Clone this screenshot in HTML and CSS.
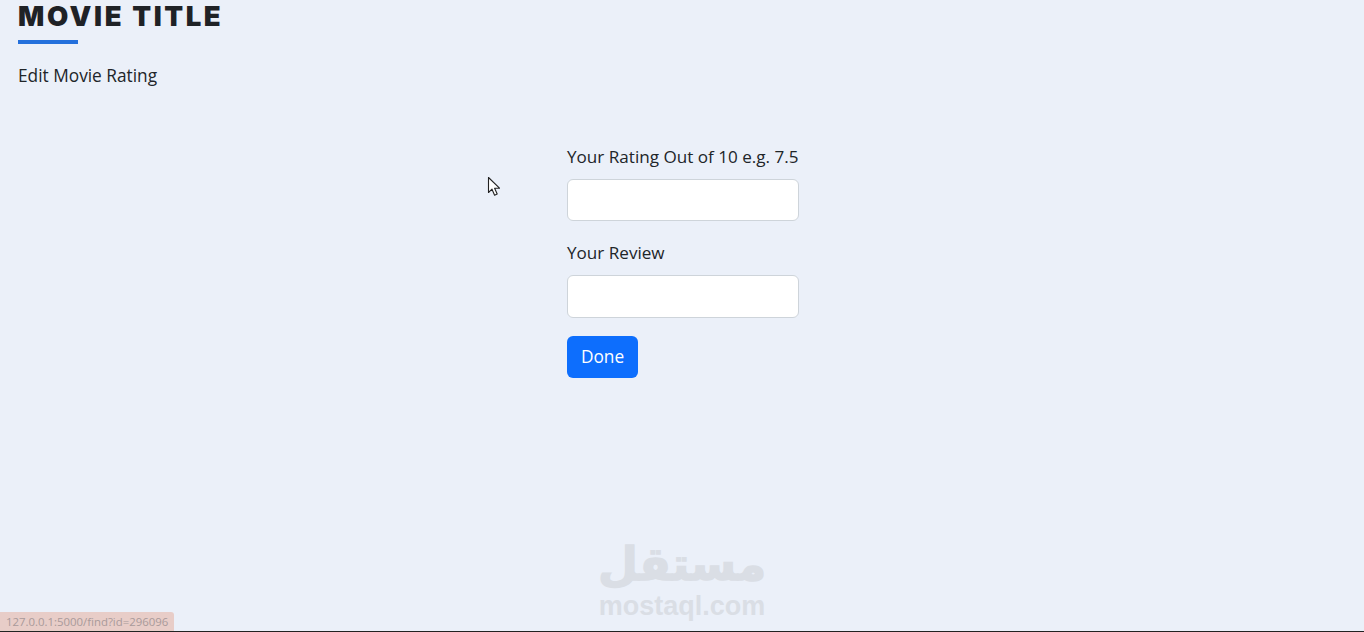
FILE: index.html
```html
<!DOCTYPE html>
<html>
<head>
    <title>Edit Movie Rating</title>
    <link rel="stylesheet" href="styles.css">
</head>
<body>
    <div class="page">
        <!-- Cabecera -->
        <div class="header">
            <h1>MOVIE TITLE</h1>
            <div class="underline"></div>
            <p>Edit Movie Rating</p>
        </div>

        <!-- Formulario -->
        <form class="rating-form">
            <label for="rating">Your Rating Out of 10 e.g. 7.5</label>
            <input type="text" id="rating">
            <label for="review">Your Review</label>
            <input type="text" id="review">
            <button type="button">Done</button>
        </form>

        <!-- Cursor -->
        <svg class="cursor" width="14" height="21" viewBox="0 0 14 21">
            <path d="M1.5 1.5V16.5L5 13.2L7.6 19.2L10.2 18L7.6 12.2H12.5Z" fill="#fff" stroke="#222" stroke-width="1.1" stroke-linejoin="round"/>
        </svg>

        <!-- Marca de agua -->
        <div class="watermark">
            <div class="wm-arabic" lang="ar" dir="rtl">مستقل</div>
            <div class="wm-latin">mostaql.com</div>
        </div>

        <div class="status">127.0.0.1:5000/find?id=296096</div>
    </div>
</body>
</html>
```
FILE: styles.css
```css
* { box-sizing: border-box; }
body { margin: 0; background: #ebf0f9; color: #212529; font-family: "Open Sans", "Noto Sans", sans-serif; }
.page { position: relative; height: 632px; overflow: hidden; border-bottom: 1px solid #222; }

.header { padding-left: 18px; }
.header h1 { margin: 0; font-family: Inter, sans-serif; font-weight: 900; font-size: 27.5px; line-height: 32px; letter-spacing: 2.6px; color: #1f2226; white-space: nowrap; }
.underline { width: 60px; height: 4px; margin-top: 8px; background: #2470dc; }
.header p { margin: 20px 0 0; font-size: 17.3px; line-height: 24px; }

.rating-form { display: flex; flex-direction: column; align-items: flex-start; width: 234px; margin: 57px auto 0; padding-left: 2px; }
.rating-form label { font-size: 17.1px; line-height: 24px; margin-bottom: 10px; white-space: nowrap; }
.rating-form input { width: 100%; height: 42px; margin-bottom: 20px; background: #fff; border: 1px solid #ced4da; border-radius: 6px; }
.rating-form #review { height: 43px; margin-bottom: 18px; }
.rating-form button { width: 71px; height: 42px; padding: 0 0 2px; background: #0d6efd; color: #fff; border: 0; border-radius: 6px; font-family: inherit; font-size: 17.3px; }

.cursor { position: absolute; left: 487px; top: 176px; }

.watermark { position: absolute; left: 590px; top: 535px; width: 184px; text-align: center; color: #dadee5; font-family: "Liberation Sans", sans-serif; font-weight: 700; }
.wm-arabic { font-family: "DejaVu Sans", sans-serif; font-size: 46px; line-height: 58px; height: 58px; -webkit-text-stroke: 1.5px #dadee5; }
.wm-latin { font-size: 27px; line-height: 26px; }

.status { position: absolute; left: 0; bottom: 0; width: 174px; height: 19px; padding-left: 6px; background: #e8cdc8; border-radius: 0 3px 0 0; color: #a99a9a; font-size: 11.4px; line-height: 20px; white-space: nowrap; }
```
